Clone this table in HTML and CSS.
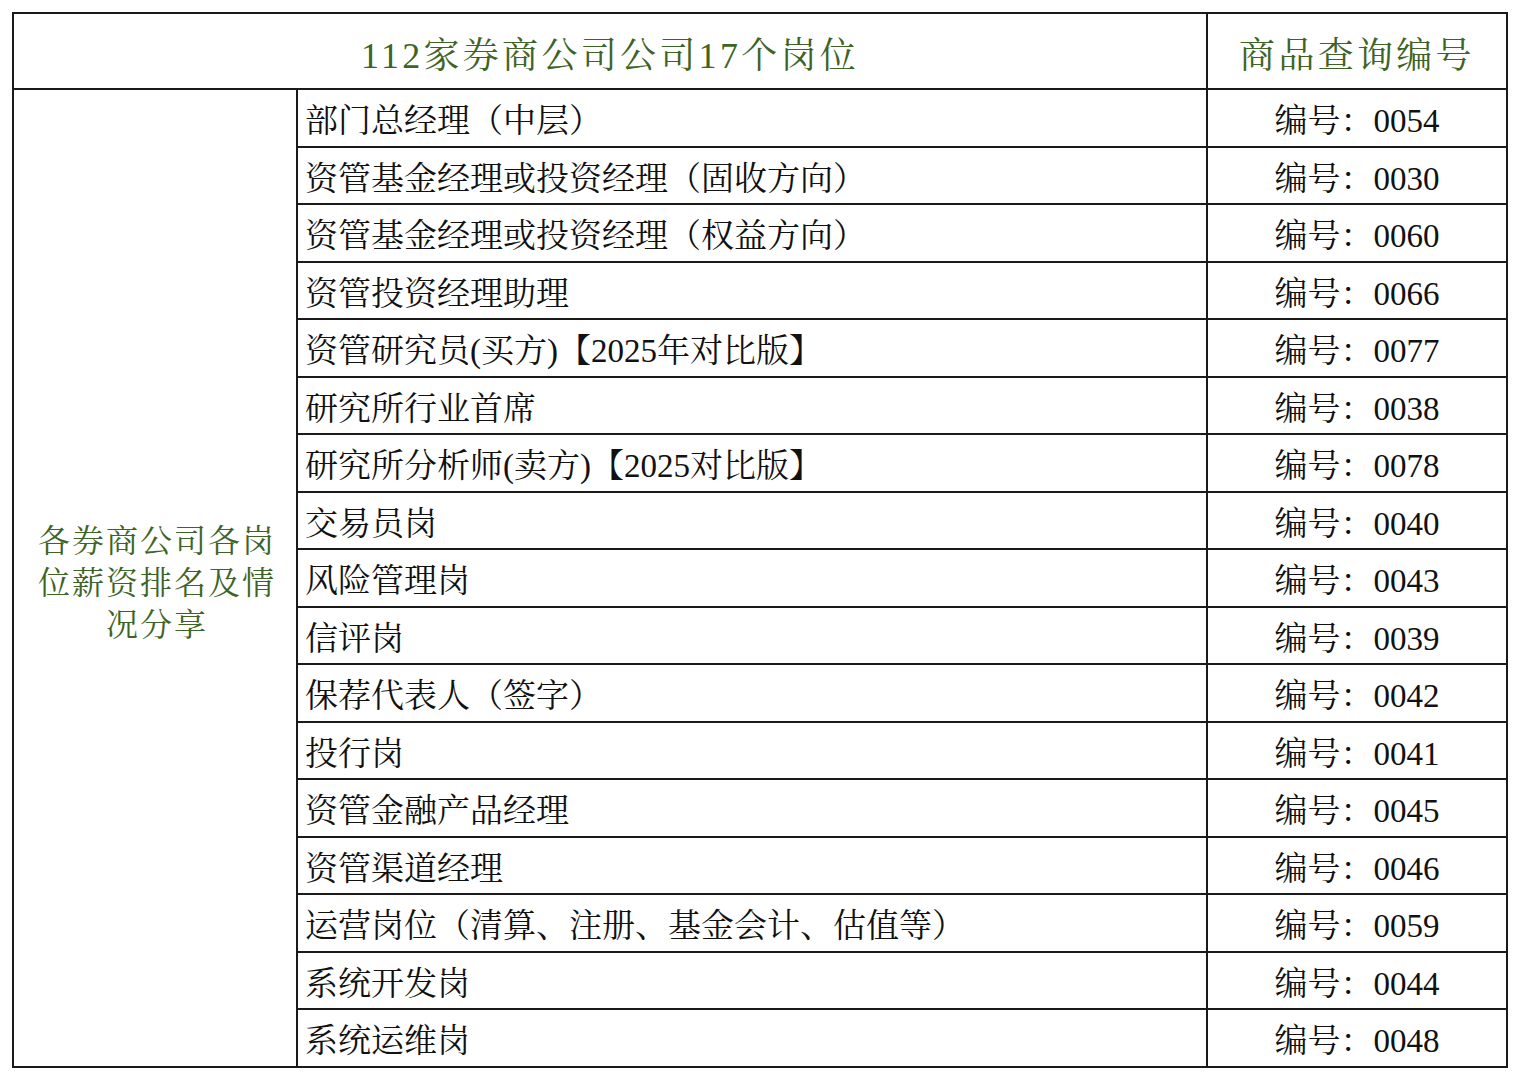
FILE: index.html
```html
<!DOCTYPE html>
<html lang="zh-CN">
<head>
<meta charset="utf-8">
<title>112家券商公司公司17个岗位</title>
<link rel="stylesheet" href="styles.css">
</head>
<body>
<table class="grid">
  <colgroup>
    <col class="c-cat">
    <col class="c-post">
    <col class="c-code">
  </colgroup>
  <thead>
    <tr class="head">
      <th colspan="2" class="title">112家券商公司公司17个岗位</th>
      <th class="title">商品查询编号</th>
    </tr>
  </thead>
  <tbody>
    <tr>
      <td rowspan="17" class="cat">各券商公司各岗<br>位薪资排名及情<br>况分享</td>
      <td class="post">部门总经理（中层）</td>
      <td class="code">编号：0054</td>
    </tr>
    <tr><td class="post">资管基金经理或投资经理（固收方向）</td><td class="code">编号：0030</td></tr>
    <tr><td class="post">资管基金经理或投资经理（权益方向）</td><td class="code">编号：0060</td></tr>
    <tr><td class="post">资管投资经理助理</td><td class="code">编号：0066</td></tr>
    <tr><td class="post">资管研究员(买方)【2025年对比版】</td><td class="code">编号：0077</td></tr>
    <tr><td class="post">研究所行业首席</td><td class="code">编号：0038</td></tr>
    <tr><td class="post">研究所分析师(卖方)【2025对比版】</td><td class="code">编号：0078</td></tr>
    <tr><td class="post">交易员岗</td><td class="code">编号：0040</td></tr>
    <tr><td class="post">风险管理岗</td><td class="code">编号：0043</td></tr>
    <tr><td class="post">信评岗</td><td class="code">编号：0039</td></tr>
    <tr><td class="post">保荐代表人（签字）</td><td class="code">编号：0042</td></tr>
    <tr><td class="post">投行岗</td><td class="code">编号：0041</td></tr>
    <tr><td class="post">资管金融产品经理</td><td class="code">编号：0045</td></tr>
    <tr><td class="post">资管渠道经理</td><td class="code">编号：0046</td></tr>
    <tr><td class="post">运营岗位（清算、注册、基金会计、估值等）</td><td class="code">编号：0059</td></tr>
    <tr><td class="post">系统开发岗</td><td class="code">编号：0044</td></tr>
    <tr><td class="post">系统运维岗</td><td class="code">编号：0048</td></tr>
  </tbody>
</table>
</body>
</html>
```
FILE: styles.css
```css
html, body {
  margin: 0;
  padding: 0;
  background: #ffffff;
}

body {
  padding: 12px 12px 0 12px;
  font-family: "Liberation Serif", "Noto Serif CJK SC", "Noto Sans CJK SC", serif;
  color: #111111;
}

.grid {
  border-collapse: collapse;
  table-layout: fixed;
  width: 1494px;
  border: 2px solid #1a1a1a;
}

.c-cat { width: 284px; }
.c-post { width: 910px; }
.c-code { width: 300px; }

.grid th,
.grid td {
  border: 2px solid #1a1a1a;
  padding: 0;
  vertical-align: middle;
}

.head {
  height: 76px;
}

.grid .title {
  font-weight: normal;
  font-size: 36px;
  letter-spacing: 3.3px;
  color: #3e6425;
  text-align: center;
  line-height: 1;
  padding-top: 10px;
}

.grid tbody tr {
  height: 57.5px;
}

.grid .cat {
  font-size: 32px;
  letter-spacing: 2px;
  line-height: 42px;
  color: #3e6425;
  text-align: center;
  padding: 10px 0 0 4px;
}

.grid .post {
  font-size: 33px;
  line-height: 1;
  padding: 8px 0 0 7px;
  white-space: nowrap;
}

.grid .code {
  font-size: 33px;
  line-height: 1;
  padding-top: 8px;
  text-align: center;
  white-space: nowrap;
}
```
